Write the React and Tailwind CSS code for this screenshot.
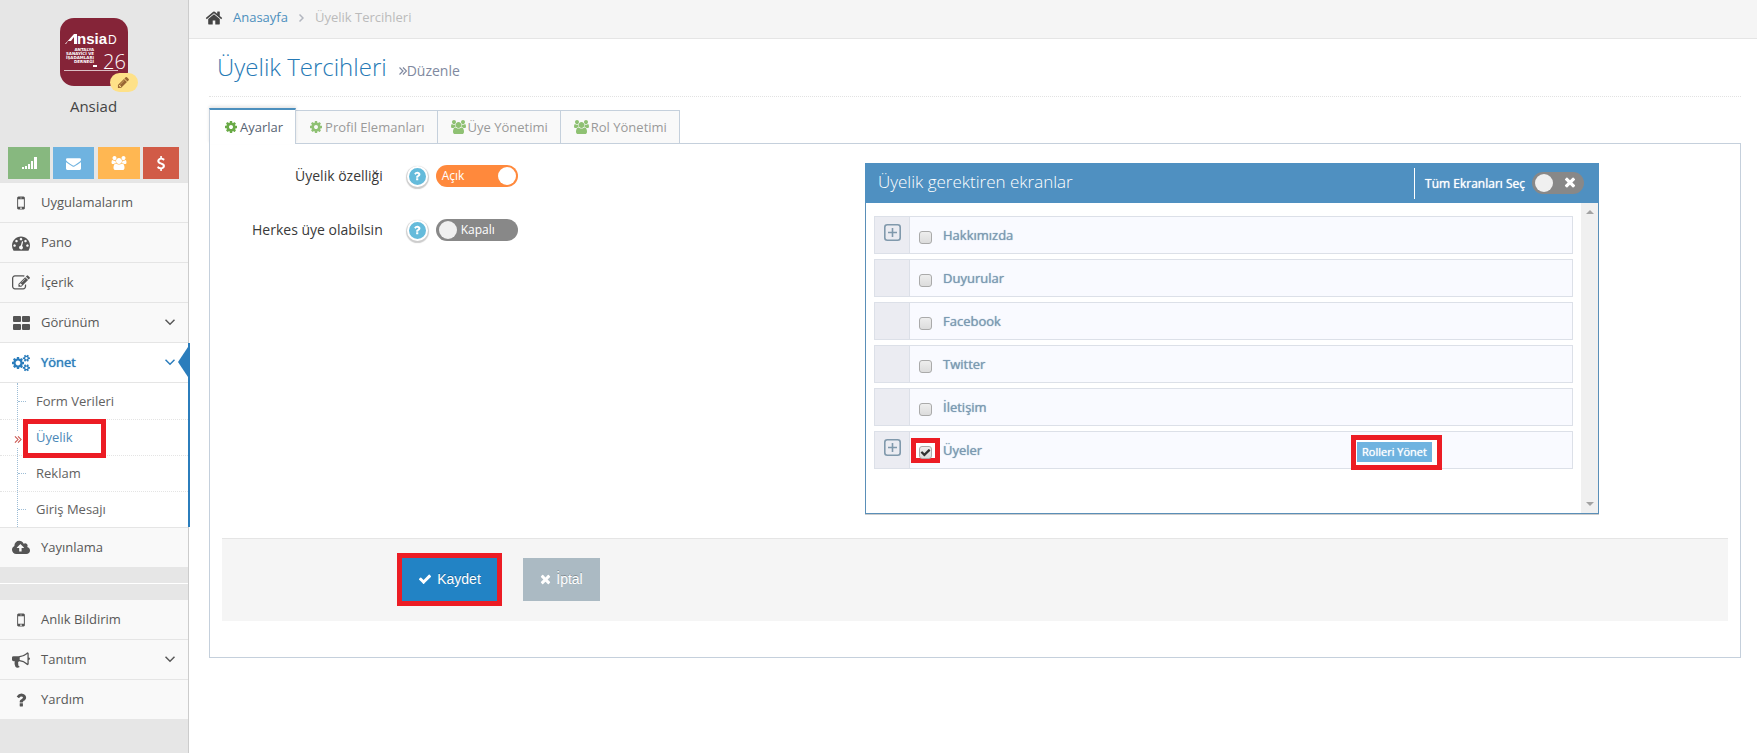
import React, { useState } from "react";

const PATHS = {
  cog: ["128 0 1536 1792", "M1152 896q0-106-75-181t-181-75-181 75-75 181 75 181 181 75 181-75 75-181zm512-109v222q0 12-8 23t-20 13l-185 28q-19 54-39 91 35 50 107 138 10 12 10 25t-9 23q-27 37-99 108t-94 71q-12 0-26-9l-138-108q-44 23-91 38-16 136-29 186-7 28-36 28h-222q-14 0-24.5-8.5t-11.5-21.5l-28-184q-49-16-90-37l-141 107q-10 9-25 9-14 0-25-11-126-114-165-168-7-10-7-23 0-12 8-23 15-21 51-66.5t54-70.5q-27-50-41-99l-183-27q-13-2-21-12.5t-8-23.5v-222q0-12 8-23t19-13l186-28q14-46 39-92-40-57-107-138-10-12-10-24 0-10 9-23 26-36 98.5-107.5t94.5-71.5q13 0 26 10l138 107q44-23 91-38 16-136 29-186 7-28 36-28h222q14 0 24.5 8.5t11.5 21.5l28 184q49 16 90 37l142-107q9-9 24-9 13 0 25 10 129 119 165 170 7 8 7 22 0 12-8 23-15 21-51 66.5t-54 70.5q26 50 41 98l183 28q13 2 21 12.5t8 23.5z"],
  check: ["0 0 1792 1792", "M1671 566q0 40-28 68l-724 724-136 136q-28 28-68 28t-68-28l-136-136-362-362q-28-28-28-68t28-68l136-136q28-28 68-28t68 28l294 295 656-657q28-28 68-28t68 28l136 136q28 28 28 68z"],
  times: ["192 0 1408 1792", "M1490 1322q0 40-28 68l-136 136q-28 28-68 28t-68-28l-294-294-294 294q-28 28-68 28t-68-28l-136-136q-28-28-28-68t28-68l294-294-294-294q-28-28-28-68t28-68l136-136q28-28 68-28t68 28l294 294 294-294q28-28 68-28t68 28l136 136q28 28 28 68t-28 68l-294 294 294 294q28 28 28 68z"],
  envelope: ["0 0 1792 1792", "M1792 710v794q0 66-47 113t-113 47h-1472q-66 0-113-47t-47-113v-794q44 49 101 87 362 246 497 345 57 42 92.5 65.5t94.5 48 110 24.5h2q51 0 110-24.5t94.5-48 92.5-65.5q170-123 498-345 57-39 100-87zm0-294q0 79-49 151t-122 123q-376 261-468 325-10 7-42.5 31t-54 38.5-52 32.5-57.5 27-50 9h-2q-23 0-50-9t-57.5-27-52-32.5-54-38.5-42.5-31q-91-64-262-182.5t-205-142.5q-62-42-117-115.5t-55-136.5q0-78 41.5-130t118.5-52h1472q65 0 112.5 47t47.5 113z"],
  users: ["-64 0 1920 1792", "M529 896q-162 5-265 128h-134q-82 0-138-40.5t-56-118.5q0-353 124-353 6 0 43.5 21t97.5 42.5 119 21.5q67 0 133-23-5 37-5 66 0 139 81 256zm1071 637q0 120-73 189.5t-194 69.5h-874q-121 0-194-69.5t-73-189.5q0-53 3.5-103.5t14-109 26.5-108.5 43-97.5 62-81 85.5-53.5 111.5-20q10 0 43 21.5t73 48 107 48 135 21.5 135-21.5 107-48 73-48 43-21.5q61 0 111.5 20t85.5 53.5 62 81 43 97.5 26.5 108.5 14 109 3.5 103.5zm-1024-1277q0 106-75 181t-181 75-181-75-75-181 75-181 181-75 181 75 75 181zm704 384q0 159-112.5 271.5t-271.5 112.5-271.5-112.5-112.5-271.5 112.5-271.5 271.5-112.5 271.5 112.5 112.5 271.5zm576 225q0 78-56 118.5t-138 40.5h-134q-103-123-265-128 81-117 81-256 0-29-5-66 66 23 133 23 59 0 119-21.5t97.5-42.5 43.5-21q124 0 124 353zm-128-609q0 106-75 181t-181 75-181-75-75-181 75-181 181-75 181 75 75 181z"],
  dashboard: ["0 0 1792 1792", "M384 1152q0-53-37.5-90.5t-90.5-37.5-90.5 37.5-37.5 90.5 37.5 90.5 90.5 37.5 90.5-37.5 37.5-90.5zm192-448q0-53-37.5-90.5t-90.5-37.5-90.5 37.5-37.5 90.5 37.5 90.5 90.5 37.5 90.5-37.5 37.5-90.5zm428 481l101-382q6-26-7.5-48.5t-38.5-29.5-48 6.5-30 39.5l-101 382q-60 5-107 43.5t-63 98.5q-20 77 20 146t117 89 146-20 89-117q16-60-6-117t-72-91zm660-33q0-53-37.5-90.5t-90.5-37.5-90.5 37.5-37.5 90.5 37.5 90.5 90.5 37.5 90.5-37.5 37.5-90.5zm-640-640q0-53-37.5-90.5t-90.5-37.5-90.5 37.5-37.5 90.5 37.5 90.5 90.5 37.5 90.5-37.5 37.5-90.5zm448 192q0-53-37.5-90.5t-90.5-37.5-90.5 37.5-37.5 90.5 37.5 90.5 90.5 37.5 90.5-37.5 37.5-90.5zm320 448q0 261-141 483-19 29-54 29h-1402q-35 0-54-29-141-221-141-483 0-182 71-348t191-286 286-191 348-71 348 71 286 191 191 286 71 348z"],
  edit: ["0 0 1792 1792", "M888 1184l116-116-152-152-116 116v56h96v96h56zm440-720q-16-16-33 1l-350 350q-17 17-1 33t33-1l350-350q17-17 1-33zm80 594v190q0 119-84.5 203.5t-203.5 84.5h-832q-119 0-203.5-84.5t-84.5-203.5v-832q0-119 84.5-203.5t203.5-84.5h832q63 0 117 25 15 7 18 23 3 17-9 29l-49 49q-14 14-32 8-23-6-45-6h-832q-66 0-113 47t-47 113v832q0 66 47 113t113 47h832q66 0 113-47t47-113v-126q0-13 9-22l64-64q15-15 35-7t20 29zm-96-738l288 288-672 672h-288v-288zm444 132l-92 92-288-288 92-92q28-28 68-28t68 28l152 152q28 28 28 68t-28 68z"],
  cogs: ["0 0 1920 1792", "M896 896q0-106-75-181t-181-75-181 75-75 181 75 181 181 75 181-75 75-181zm768 512q0-52-38-90t-90-38-90 38-38 90q0 53 37.5 90.5t90.5 37.5 90.5-37.5 37.5-90.5zm0-1024q0-52-38-90t-90-38-90 38-38 90q0 53 37.5 90.5t90.5 37.5 90.5-37.5 37.5-90.5zm-384 421v185q0 10-7 19.5t-16 10.5l-155 24q-11 35-32 76 34 48 90 115 7 11 7 20 0 12-7 19-23 30-82.5 89.5t-78.5 59.5q-11 0-21-7l-115-90q-37 19-77 31-11 108-23 155-7 24-30 24h-186q-11 0-20-7.5t-10-17.5l-23-153q-34-10-75-31l-118 89q-7 7-20 7-11 0-21-8-144-133-144-160 0-9 7-19 10-14 41-53t47-61q-23-44-35-82l-152-24q-10-1-17-9.5t-7-19.5v-185q0-10 7-19.5t16-10.5l155-24q11-35 32-76-34-48-90-115-7-11-7-20 0-12 7-20 22-30 82-89t79-59q11 0 21 7l115 90q34-18 77-32 11-108 23-154 7-24 30-24h186q11 0 20 7.5t10 17.5l23 153q34 10 75 31l118-89q8-7 20-7 11 0 21 8 144 133 144 160 0 9-7 19-12 16-42 54t-45 60q23 48 34 82l152 23q10 2 17 10.5t7 19.5zm640 533v140q0 16-149 31-12 27-30 52 51 113 51 138 0 4-4 7-122 71-124 71-8 0-46-47t-52-68q-20 2-30 2t-30-2q-14 21-52 68t-46 47q-2 0-124-71-4-3-4-7 0-25 51-138-18-25-30-52-149-15-149-31v-140q0-16 149-31 13-29 30-52-51-113-51-138 0-4 4-7 4-2 35-20t59-34 30-16q8 0 46 46.5t52 67.5q20-2 30-2t30 2q51-71 92-112l6-2q4 0 124 70 4 3 4 7 0 25-51 138 17 23 30 52 149 15 149 31zm0-1024v140q0 16-149 31-12 27-30 52 51 113 51 138 0 4-4 7-122 71-124 71-8 0-46-47t-52-68q-20 2-30 2t-30-2q-14 21-52 68t-46 47q-2 0-124-71-4-3-4-7 0-25 51-138-18-25-30-52-149-15-149-31v-140q0-16 149-31 13-29 30-52-51-113-51-138 0-4 4-7 4-2 35-20t59-34 30-16q8 0 46 46.5t52 67.5q20-2 30-2t30 2q51-71 92-112l6-2q4 0 124 70 4 3 4 7 0 25-51 138 17 23 30 52 149 15 149 31z"],
  cloud: ["-64 0 1920 1792", "M1216 864q0-14-9-23l-352-352q-9-9-23-9t-23 9l-351 351q-10 12-10 24 0 14 9 23t23 9h224v352q0 13 9.5 22.5t22.5 9.5h192q13 0 22.5-9.5t9.5-22.5v-352h224q13 0 22.5-9.5t9.5-22.5zm640 288q0 159-112.5 271.5t-271.5 112.5h-1088q-185 0-316.5-131.5t-131.5-316.5q0-130 70-240t188-165q-2-30-2-43 0-212 150-362t362-150q156 0 285.5 87t188.5 231q71-62 166-62 106 0 181 75t75 181q0 76-41 138 130 31 213.5 135.5t83.5 238.5z"],
  bullhorn: ["0 0 1792 1792", "M1664 640q53 0 90.5 37.5t37.5 90.5-37.5 90.5-90.5 37.5v384q0 52-38 90t-90 38q-417-347-812-380-58 19-91 66t-31 100.5 40 92.5q-20 33-23 65.5t6 58 33.5 55 48 50 61.5 50.5q-29 58-111.5 83t-168.5 11.5-132-55.5q-7-23-29.5-87.5t-32-94.5-23-89-15-101 3.5-98.5 22-110.5h-122q-66 0-113-47t-47-113v-192q0-66 47-113t113-47h480q435 0 896-384 52 0 90 38t38 90v384zm-128 604v-954q-394 302-768 343v270q377 42 768 341z"],
  mobile: ["0 0 1792 1792", "M976 1408q0-33-23.5-56.5t-56.5-23.5-56.5 23.5-23.5 56.5 23.5 56.5 56.5 23.5 56.5-23.5 23.5-56.5zm208-160v-704q0-13-9.5-22.5t-22.5-9.5h-512q-13 0-22.5 9.5t-9.5 22.5v704q0 13 9.5 22.5t22.5 9.5h512q13 0 22.5-9.5t9.5-22.5zm-192-848q0-16-16-16h-160q-16 0-16 16t16 16h160q16 0 16-16zm288-16v1024q0 52-38 90t-90 38h-512q-52 0-90-38t-38-90v-1024q0-52 38-90t90-38h512q52 0 90 38t38 90z"],
  question: ["0 0 1792 1792", "M1088 1256v240q0 16-12 28t-28 12h-240q-16 0-28-12t-12-28v-240q0-16 12-28t28-12h240q16 0 28 12t12 28zm316-600q0 54-15.5 101t-35 76.5-55 59.5-57.5 43.5-61 35.5q-41 23-68.5 65t-27.5 67q0 17-12 32.5t-28 15.5h-240q-15 0-25.5-18.5t-10.5-37.5v-45q0-83 65-156.5t143-108.5q59-27 84-56t25-76q0-42-46.5-74t-107.5-32q-65 0-108 29-35 25-107 115-13 16-31 16-12 0-25-8l-164-125q-13-10-15.5-25t5.5-28q160-266 464-266 80 0 161 31t146 83 106 127.5 41 158.5z"],
  home: ["0 0 1792 1792", "M1472 992v480q0 26-19 45t-45 19h-384v-384h-256v384h-384q-26 0-45-19t-19-45v-480q0-1 .5-3t.5-3l575-474 575 474q1 2 1 6zm223-69l-62 74q-8 9-21 11h-3q-13 0-21-7l-692-577-692 577q-12 8-24 7-13-2-21-11l-62-74q-8-10-7-23.5t11-21.5l719-599q32-26 76-26t76 26l244 204v-195q0-14 9-23t23-9h192q14 0 23 9t9 23v408l219 182q10 8 11 21.5t-7 23.5z"],
  dollar: ["256 0 1280 1792", "M1362 1185q0 153-99.5 263.5t-258.5 136.5v175q0 14-9 23t-23 9h-135q-13 0-22.5-9.5t-9.5-22.5v-175q-66-9-127.5-31t-101.5-44.5-74-48-46.5-37.5-17.5-18q-17-21-2-41l103-135q7-10 23-12 15-2 24 9l2 2q113 99 243 125 37 8 74 8 81 0 142.5-43t61.5-122q0-28-15-53t-33.5-42-58.5-37.5-66-32-80-32.5q-39-16-61.5-25t-61.5-26.5-62.5-31-56.5-35.5-53.5-42.5-43.5-49-35.5-58-21-66.5-8.5-78q0-138 98-242t255-134v-180q0-13 9.5-22.5t22.5-9.5h135q14 0 23 9t9 23v176q57 6 110.5 23t87 33.5 63.5 37.5 39 29 15 14q17 18 5 38l-81 146q-8 15-23 16-14 3-27-7-3-3-14.5-12t-39-26.5-58.5-32-74.5-26-85.5-11.5q-95 0-155 43t-60 111q0 26 8.5 48t29.5 41.5 39.5 33 56 31 60.5 27 70 27.5q53 20 81 31.5t76 35 75.5 42.5 62 50 53 63.5 31.5 76.5 13 94z"],
  pencil: ["0 0 1792 1792", "M491 1536l91-91-235-235-91 91v107h128v128h107zm523-928q0-22-22-22-10 0-17 7l-542 542q-7 7-7 17 0 22 22 22 10 0 17-7l542-542q7-7 7-17zm-54-192l416 416-832 832h-416v-416zm683 96q0 53-37 90l-166 166-416-416 166-165q36-38 90-38 53 0 91 38l235 234q37 39 37 91z"],
  signal: ["0 0 15 14", "M0 11h2v2H0zM3 10h2v3H3zM6 8h2v5H6zM9 5h2v8H9zM12 1h3v12h-3z"],
  large: ["0 0 18 18", "M1 2h7q1 0 1 1v4q0 1-1 1H2Q1 8 1 7V3Q1 2 2 2zM11 2h6q1 0 1 1v4q0 1-1 1h-6q-1 0-1-1V3q0-1 1-1zM2 10h6q1 0 1 1v4q0 1-1 1H2q-1 0-1-1v-4q0-1 1-1zM11 10h6q1 0 1 1v4q0 1-1 1h-6q-1 0-1-1v-4q0-1 1-1z"],
};

function Icon({ name, className }) {
  const [box, d] = PATHS[name];
  return (
    <svg viewBox={box} fill="currentColor" aria-hidden="true" className={"shrink-0 " + className}>
      <path d={d} />
    </svg>
  );
}

function Line({ box, d, className }) {
  return (
    <svg viewBox={box} fill="none" stroke="currentColor" strokeWidth="1.5" aria-hidden="true" className={"shrink-0 " + className}>
      <path d={d} />
    </svg>
  );
}

const Down = () => <Line box="0 0 10 7" d="M0.5 0.8 5 5.3 9.5 0.8" className="h-[7px] w-[10px]" />;
const DoubleRight = ({ className }) => (
  <svg viewBox="0 0 8 8" fill="none" stroke="currentColor" strokeWidth="1.2" aria-hidden="true" className={"shrink-0 " + className}>
    <path d="M0.5 0.5 4 4 0.5 7.5M4 0.5 7.5 4 4 7.5" />
  </svg>
);

function Logo() {
  return (
    <svg viewBox="0 0 68 68" className="size-[68px]" role="img" aria-label="Ansiad">
      <rect width="68" height="68" rx="14" fill="#852438" />
      <g fill="#fff">
        <path d="M5 26 14 16h3v10h-3v-7l-3 4-3 0-2 3z" />
        <text x="17" y="26" fontFamily="Liberation Sans" fontWeight="700" fontSize="15">nsia</text>
        <text x="48" y="26" fontFamily="Liberation Sans" fontWeight="400" fontSize="12">D</text>
        <g fontFamily="DejaVu Sans" fontWeight="700" fontSize="4" textAnchor="end">
          <text x="34" y="33">ANTALYA</text>
          <text x="34" y="37">SANAYİCİ VE</text>
          <text x="34" y="41">İŞADAMLARI</text>
          <text x="34" y="45">DERNEĞİ</text>
        </g>
        <rect x="33" y="47" width="4" height="2" />
        <rect x="4" y="52" width="54" height="1" opacity=".7" />
        <text x="43" y="51" fontFamily="Open Sans" fontWeight="300" fontSize="20">26</text>
      </g>
    </svg>
  );
}

function NavRow({ icon, label, expandable, active, first }) {
  return (
    <a
      href="#"
      className={
        "relative flex items-center pl-3 pr-[13px] text-[13px] " +
        (first ? "h-[39px] " : "h-10 border-t border-[#e5e5e5] ") +
        (active ? "bg-white text-[#2b7dbc] [text-shadow:0_0_1px_currentColor]" : "bg-[#f9f9f9] text-[#585858]")
      }
    >
      <Icon name={icon} className={"mr-[11px] h-[18px] w-[18px] " + (active ? "" : "text-[#555]")} />
      <span className="grow">{label}</span>
      {expandable && <Down />}
      {active && (
        <svg viewBox="0 0 10 30" className="absolute right-0 top-1 h-[30px] w-[10px]" aria-hidden="true">
          <path d="M10 0v30L0 15z" fill="#2b7dbc" />
        </svg>
      )}
    </a>
  );
}

function SubRow({ label, current, last }) {
  return (
    <li className="relative">
      <span className="absolute left-[18px] top-[17px] w-2 border-t border-dotted border-[#9dbdd6]" />
      <a
        href="#"
        className={
          "flex items-center pl-9 text-[13px] " +
          (last ? "h-[35px] " : "h-9 border-b border-dotted border-[#e4e4e4] ") +
          (current ? "text-[#4b88b7]" : "text-[#616161]")
        }
      >
        {label}
      </a>
      {current && (
        <>
          <span className="absolute left-[14px] top-3 bg-white py-1 text-[#c8504a]">
            <DoubleRight className="h-[7px] w-2" />
          </span>
          <span className="pointer-events-none absolute -top-px left-[23px] h-[39px] w-[83px] border-5 border-[#ec1c24]" />
        </>
      )}
    </li>
  );
}

function Sidebar() {
  return (
    <aside className="w-[189px] shrink-0 border-r border-[#ccc] bg-[#e6e6e6]">
      <div className="flex h-[147px] flex-col items-center pr-px pt-[18px]">
        <div className="relative">
          <Logo />
          <button aria-label="Logoyu düzenle" className="absolute -right-[10px] top-[55px] flex h-[19px] w-7 items-center justify-center rounded-full bg-[#fee188] text-[#996633]">
            <Icon name="pencil" className="size-[13px]" />
          </button>
        </div>
        <span className="mt-[9px] text-[15px] leading-[22px] text-[#444]">Ansiad</span>
      </div>
      <div className="flex h-[35px] gap-[3px] pl-2 text-white">
        <button aria-label="İstatistik" className="flex h-8 w-[42px] items-center justify-center bg-[#87b87f]"><Icon name="signal" className="h-[14px] w-[15px]" /></button>
        <button aria-label="Mesajlar" className="mr-px flex h-8 w-[41px] items-center justify-center bg-[#6fb3e0]"><Icon name="envelope" className="size-[15px]" /></button>
        <button aria-label="Üyeler" className="flex h-8 w-[42px] items-center justify-center bg-[#ffb752]"><Icon name="users" className="h-[14px] w-4" /></button>
        <button aria-label="Ödemeler" className="flex h-8 w-9 items-center justify-center bg-[#d15b47]"><Icon name="dollar" className="h-[15px] w-3" /></button>
      </div>
      <nav>
        <NavRow icon="mobile" label="Uygulamalarım" />
        <NavRow icon="dashboard" label="Pano" />
        <NavRow icon="edit" label="İçerik" />
        <NavRow icon="large" label="Görünüm" expandable />
        <div className="relative">
          <NavRow icon="cogs" label="Yönet" expandable active />
          <ul className="relative border-y border-[#e5e5e5] bg-white pt-px">
            <li aria-hidden="true" className="absolute inset-y-0 left-[17px] border-l border-dotted border-[#9dbdd6]" />
            <SubRow label="Form Verileri" />
            <SubRow label="Üyelik" current />
            <SubRow label="Reklam" />
            <SubRow label="Giriş Mesajı" last />
          </ul>
          <span className="absolute -right-[2px] bottom-px top-px w-[2px] bg-[#2b7dbc]" />
        </div>
        <NavRow icon="cloud" label="Yayınlama" first />
        <div className="flex h-[33px] items-center"><hr className="w-full border-white" /></div>
        <NavRow icon="mobile" label="Anlık Bildirim" first />
        <NavRow icon="bullhorn" label="Tanıtım" expandable />
        <NavRow icon="question" label="Yardım" />
      </nav>
    </aside>
  );
}

function Tab({ icon, label, active }) {
  return (
    <button
      role="tab"
      aria-selected={!!active}
      className={
        "flex items-center pr-3 text-[13px] " +
        (icon === "users" ? "pl-[13px] " : active ? "pl-[15px] " : "pl-[14px] ") +
        (active
          ? "relative -mb-px h-9 border-x border-t-2 border-x-[#c5d0dc] border-t-[#4c8fbd] bg-white pt-px text-[#576373] shadow-[0_-2px_3px_0_rgba(0,0,0,0.1)]"
          : "mt-[2px] h-[33px] border-r border-t border-[#c5d0dc] bg-[#f9f9f9] pt-px text-[#999]")
      }
    >
      <Icon
        name={icon}
        className={"mb-px h-[14px] " + (icon === "users" ? "mr-[2px] w-[15px] " : "mr-[3px] w-3 ") + (active ? "text-[#69aa46]" : "text-[#8fc173]")}
      />
      {label}
    </button>
  );
}

function Toggle({ id, label, initial }) {
  const [on, setOn] = useState(initial);
  return (
    <div className="flex items-center">
      <label htmlFor={id} className="w-1/4 whitespace-nowrap text-right text-sm text-[#393939]">{label}</label>
      <button aria-label="Yardım" className="ml-6 flex size-[21px] items-center justify-center rounded-full border-2 border-white bg-[#65bbdb] text-white shadow-[0_1px_1px_1px_#ccc]">
        <Icon name="question" className="size-3" />
      </button>
      <label
        className={
          "relative ml-2 flex h-[22px] w-[82px] cursor-pointer items-center rounded-full text-xs text-white " +
          (on ? "bg-[#ff893c] pl-[6px]" : "bg-[#888] pl-[25px]")
        }
      >
        <input id={id} type="checkbox" checked={on} onChange={() => setOn(!on)} className="sr-only" />
        {on ? "Açık" : "Kapalı"}
        <span className={"absolute top-[2px] size-[18px] rounded-full " + (on ? "right-[2px] bg-white" : "left-[3px] bg-[#f0f0f0]")} />
      </label>
    </div>
  );
}

function ScreenRow({ id, label, expandable, selected, roles }) {
  const [on, setOn] = useState(!!selected);
  return (
    <li className="flex h-[38px] border border-[#dce0e8] bg-[#f9faff]">
      <div className="flex w-[35px] items-start justify-center border-r border-[#dce0e8] bg-[#ebecf2] pt-[7px]">
        {expandable && (
          <button aria-label={label + " aç"} className="text-[#8099ac]">
            <svg viewBox="0 0 17 17" fill="none" stroke="currentColor" className="size-[17px]" aria-hidden="true">
              <rect x="0.8" y="0.8" width="15.4" height="15.4" rx="2.5" strokeWidth="1.6" />
              <path d="M8.5 4v9M4 8.5h9" strokeWidth="1.6" />
            </svg>
          </button>
        )}
      </div>
      <div className="flex grow items-center">
        <span className="relative ml-[9px] mt-[5px] flex size-[13px]">
          {selected && <span className="absolute -left-2 -top-2 h-[25px] w-[29px] border-5 border-[#ec1c24] bg-white" />}
          <input
            id={id}
            type="checkbox"
            checked={on}
            onChange={() => setOn(!on)}
            className="relative size-[13px] appearance-none rounded-[3px] border border-[#aaa] bg-linear-to-b from-[#eee] to-[#dcdcdc]"
          />
          {on && <Icon name="check" className="pointer-events-none absolute left-px top-px size-[11px] text-[#333]" />}
        </span>
        <label htmlFor={id} className="ml-[11px] grow pt-[2px] text-[13px] text-[#7b9ab2] [text-shadow:0_0_1px_currentColor]">{label}</label>
        {roles && (
          <span className="relative mr-[140px] mt-1 flex">
            <span className="absolute -left-[6px] -top-[7px] h-[35px] w-[91px] border-5 border-[#ec1c24] bg-white" />
            <button className="relative h-5 w-[75px] whitespace-nowrap bg-[#6fb3e0] text-[11px] text-white [text-shadow:0_0_1px_currentColor]">Rolleri Yönet</button>
          </span>
        )}
      </div>
    </li>
  );
}

function ScreensPanel() {
  return (
    <section className="flex flex-col border border-[#5a8fb8] shadow-[0_1px_0_0_#ccc]">
      <header className="-mx-px -mt-px flex h-10 items-center bg-[#4f90c1] pl-[13px] pr-[15px] text-white">
        <h2 className="grow pb-[2px] text-[17px] font-light">Üyelik gerektiren ekranlar</h2>
        <div className="flex h-[31px] items-center border-l border-white pl-[10px]">
          <label htmlFor="all" className="pt-[2px] text-xs [text-shadow:0_0_1px_currentColor]">Tüm Ekranları Seç</label>
          <label className="relative ml-[7px] flex h-[22px] w-[52px] cursor-pointer items-center rounded-full bg-[#888]">
            <input id="all" type="checkbox" className="sr-only" />
            <span className="absolute left-[3px] top-[2px] size-[18px] rounded-full bg-[#f0f0f0]" />
            <Icon name="times" className="mb-[2px] ml-8 h-4 w-3" />
          </label>
        </div>
      </header>
      <div className="flex">
        <ul className="flex grow flex-col gap-[5px] px-2 pb-11 pt-[13px]">
          <ScreenRow id="s1" label="Hakkımızda" expandable />
          <ScreenRow id="s2" label="Duyurular" />
          <ScreenRow id="s3" label="Facebook" />
          <ScreenRow id="s4" label="Twitter" />
          <ScreenRow id="s5" label="İletişim" />
          <ScreenRow id="s6" label="Üyeler" expandable selected roles />
        </ul>
        <div className="flex w-[17px] flex-col items-center justify-between bg-[#f0f0f0] py-[7px] text-[#a3a3a3]" aria-hidden="true">
          <svg viewBox="0 0 8 4" className="h-1 w-2"><path d="M4 0l4 4H0z" fill="currentColor" /></svg>
          <svg viewBox="0 0 8 4" className="h-1 w-2"><path d="M4 4L0 0h8z" fill="currentColor" /></svg>
        </div>
      </div>
    </section>
  );
}

export default function App() {
  return (
    <div className="flex min-h-screen bg-white font-['Open_Sans',sans-serif]">
      <Sidebar />
      <main className="min-w-0 grow">
        <nav className="flex h-[39px] items-center border-b border-[#e5e5e5] bg-[#f5f5f5] pb-[3px] pl-4 text-[13px]">
          <Icon name="home" className="size-[18px] text-[#444]" />
          <a href="#" className="ml-[10px] text-[#4c8fbd]">Anasayfa</a>
          <Line box="0 0 5 8" d="M0.5 0.5 4 4 0.5 7.5" className="mx-[11px] h-2 w-[5px] text-[#b2b6bf]" />
          <span className="text-[#bbb]">Üyelik Tercihleri</span>
        </nav>
        <div className="pb-24 pl-5 pr-4">
          <div className="flex h-[58px] items-start border-b border-dotted border-[#e2e2e2] pl-2 pt-3">
            <h1 className="text-2xl font-light text-[#2679b5]">Üyelik Tercihleri</h1>
            <span className="ml-3 mt-[10px] flex items-center text-sm text-[#8089a0]">
              <DoubleRight className="size-2" />
              Düzenle
            </span>
          </div>
          <div role="tablist" className="mt-[11px] flex items-start">
            <Tab icon="cog" label="Ayarlar" active />
            <Tab icon="cog" label="Profil Elemanları" />
            <Tab icon="users" label="Üye Yönetimi" />
            <Tab icon="users" label="Rol Yönetimi" />
          </div>
          <div className="border border-[#c5d0dc] px-3 pb-9 pt-[19px]">
            <form onSubmit={(e) => e.preventDefault()}>
              <div className="grid grid-cols-[643fr_734fr_129fr]">
                <div className="flex flex-col gap-8 pt-[2px]">
                  <Toggle id="feature" label="Üyelik özelliği" initial={true} />
                  <Toggle id="everyone" label="Herkes üye olabilsin" initial={false} />
                </div>
                <ScreensPanel />
              </div>
              <div className="mt-6 flex h-[83px] items-center gap-[21px] border-t border-[#e5e5e5] bg-[#f5f5f5] pb-[2px] pl-[175px] font-['Liberation_Sans',sans-serif] text-sm text-white">
                <button type="submit" className="flex h-[53px] w-[105px] items-center justify-center gap-[5px] border-5 border-[#ec1c24] bg-[#2283c5] [text-shadow:0_-1px_0_rgba(0,0,0,0.25)]">
                  <Icon name="check" className="size-[14px]" />
                  Kaydet
                </button>
                <button type="button" className="flex h-[43px] w-[77px] items-center justify-center gap-[5px] bg-[#abbac3] [text-shadow:0_-1px_0_rgba(0,0,0,0.25)]">
                  <Icon name="times" className="h-[14px] w-[11px]" />
                  İptal
                </button>
              </div>
            </form>
          </div>
        </div>
      </main>
    </div>
  );
}
